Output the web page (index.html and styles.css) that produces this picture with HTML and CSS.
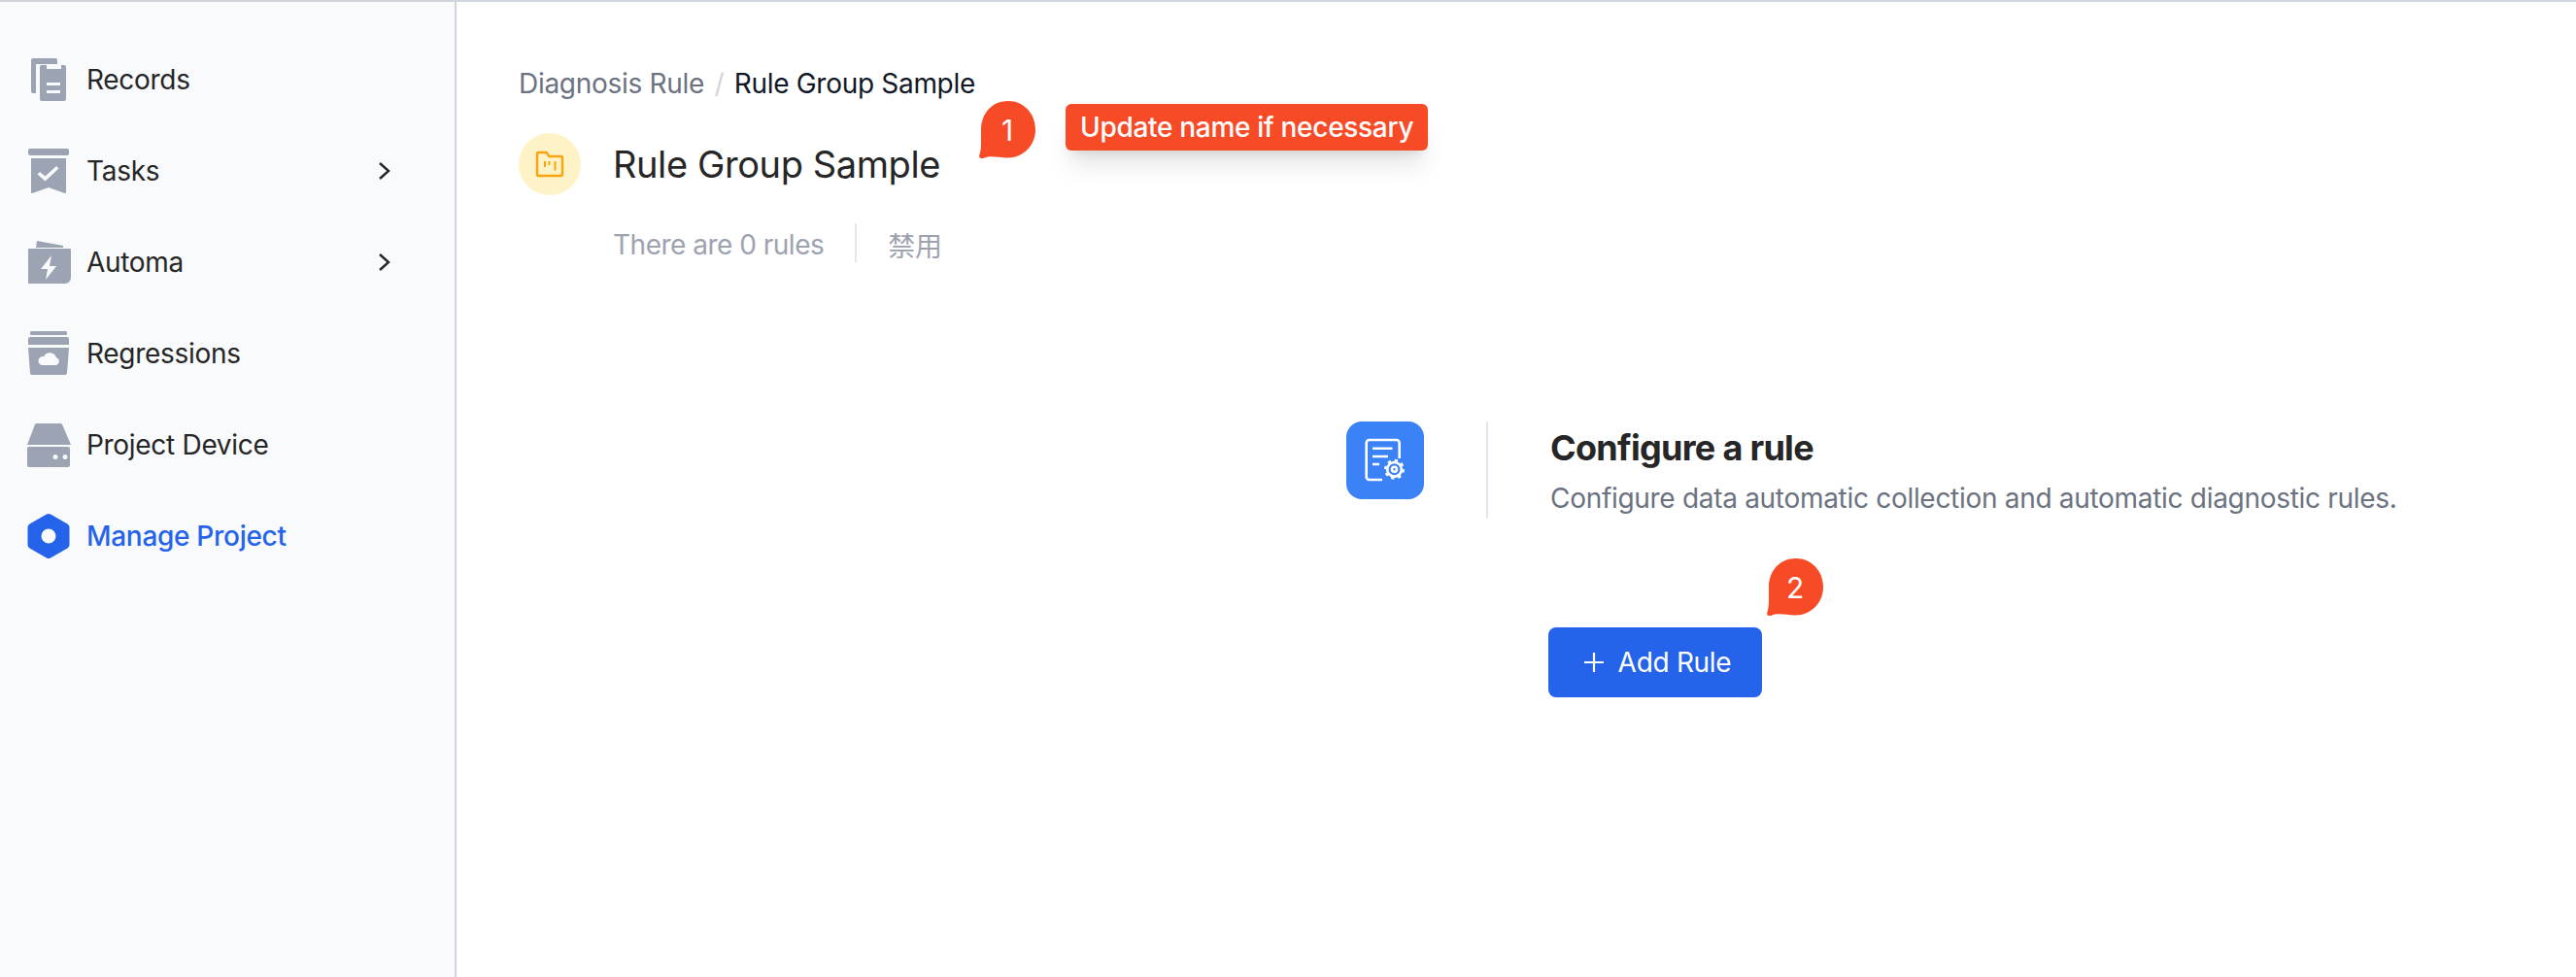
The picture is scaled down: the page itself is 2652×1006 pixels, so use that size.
FILE: index.html
```html
<!DOCTYPE html>
<html lang="en">
<head>
    <meta charset="UTF-8">
    <title>Rule Group Sample</title>
    <link rel="stylesheet" href="styles.css">
</head>
<body>
    <aside class="sidebar">
        <a class="nav-item">
            <svg class="nav-icon" viewBox="0 0 48 48"><path d="M8 2h23a2 2 0 0 1 2 2v4H11v30H8a2 2 0 0 1-2-2V4a2 2 0 0 1 2-2z"/><path fill-rule="evenodd" d="M15 11a2 2 0 0 1 2-2h5v4h15V9h3a2 2 0 0 1 2 2v33a2 2 0 0 1-2 2H17a2 2 0 0 1-2-2zM22 27v3h14v-3zM22 35v3h14v-3z"/></svg>
            <span>Records</span>
        </a>
        <a class="nav-item">
            <svg class="nav-icon" viewBox="0 0 48 48"><rect x="3" y="1" width="42" height="7" rx="2"/><path fill-rule="evenodd" d="M6 11h36v35a1 1 0 0 1-1.300.9L24 41l-16.700 5.900A1 1 0 0 1 6 46zM15 25l-2.500 2.500 8 7 14-13-2.500-2.500-11.500 10.500z"/></svg>
            <span>Tasks</span>
            <svg class="chevron" viewBox="0 0 14 20"><path d="M2 2l9 8-9 8"/></svg>
        </a>
        <a class="nav-item">
            <svg class="nav-icon" viewBox="0 0 48 48"><path d="M12 2l27 5v2H11z"/><path fill-rule="evenodd" d="M3 11a1 1 0 0 1 1-1h42a1 1 0 0 1 1 1v29a6 6 0 0 1-6 6H4a1 1 0 0 1-1-1zM27 17l-11 14h7l-2 11 11-14h-7z"/></svg>
            <span>Automa</span>
            <svg class="chevron" viewBox="0 0 14 20"><path d="M2 2l9 8-9 8"/></svg>
        </a>
        <a class="nav-item">
            <svg class="nav-icon" viewBox="0 0 48 48"><rect x="5" y="1" width="38" height="4" rx="1.500"/><path d="M5 7h38a2 2 0 0 1 2 2v5.500a.5.5 0 0 1-.5.5H3.500a.5.5 0 0 1-.5-.5V9a2 2 0 0 1 2-2z"/><path fill-rule="evenodd" d="M3 18h42l-2 26a2 2 0 0 1-2 2H7a2 2 0 0 1-2-2zM17 36h14a4 4 0 0 0 1-7.800 7 7 0 0 0-13-1A4.500 4.500 0 0 0 17 36z"/></svg>
            <span>Regressions</span>
        </a>
        <a class="nav-item">
            <svg class="nav-icon" viewBox="0 0 48 48"><path d="M10 3a2 2 0 0 1 2-1h24a2 2 0 0 1 2 1l9 21H2z"/><path fill-rule="evenodd" d="M2 28a2 2 0 0 1 2-2h40a2 2 0 0 1 2 2v17a2 2 0 0 1-2 2H4a2 2 0 0 1-2-2zM31 39a2.500 2.500 0 1 0 0-5 2.500 2.500 0 0 0 0 5zM41 39a2.500 2.500 0 1 0 0-5 2.500 2.500 0 0 0 0 5z"/></svg>
            <span>Project Device</span>
        </a>
        <a class="nav-item active">
            <svg class="nav-icon" viewBox="0 0 48 48"><path fill-rule="evenodd" d="M22 1.600a4 4 0 0 1 4 0l17.500 10a4 4 0 0 1 2 3.400v18a4 4 0 0 1-2 3.400l-17.500 10a4 4 0 0 1-4 0l-17.500-10a4 4 0 0 1-2-3.400V15a4 4 0 0 1 2-3.400zM24 31.500a7.500 7.500 0 1 0 0-15 7.500 7.500 0 0 0 0 15z"/></svg>
            <span>Manage Project</span>
        </a>
    </aside>

    <main class="content">
        <div class="breadcrumb">
            <span class="crumb-parent">Diagnosis Rule</span>
            <span class="crumb-sep">/</span>
            <span class="crumb-current">Rule Group Sample</span>
        </div>

        <div class="group-head">
            <div class="group-icon">
                <svg viewBox="0 0 30 28"><path class="folder" d="M2 3.500a1.500 1.500 0 0 1 1.500-1.500h8l3 4h12a1.500 1.500 0 0 1 1.500 1.500v17a1.500 1.500 0 0 1-1.500 1.500h-23A1.500 1.500 0 0 1 2 24.500z"/><path d="M10 11v6M14.500 11v4M20.500 11v9.500"/></svg>
            </div>
            <div class="group-title">
                <h1>Rule Group Sample</h1>
                <div class="bubble bubble-one">
                    <svg viewBox="0 0 60 60"><path d="M59 29.500C59 46 46 59 29.500 58.500 22 58.300 12 56 6.500 58.500 3 60 0 58.500 1.500 55 3.500 50 3 40 3 29.500 3 13 14 0 31 0 47 0 59 13 59 29.500z"/></svg>
                    <span>1</span>
                </div>
                <div class="hint">Update name if necessary</div>
            </div>
        </div>

        <div class="group-meta">
            <span class="meta-count">There are 0 rules</span>
            <div class="meta-rule"></div>
            <span class="meta-status">禁用</span>
        </div>

        <section class="config">
            <div class="config-head">
                <div class="config-icon">
                    <svg viewBox="0 0 48 48"><path d="M21 44H7.700a3 3 0 0 1-3-3V6a3 3 0 0 1 3-3h28a3 3 0 0 1 3 3v16"/><path d="M11 11.700h20.500M11 20h16M11 28h7"/><circle cx="33.500" cy="33.300" r="7.300"/><circle class="cog-teeth" cx="33.500" cy="33.300" r="9.300"/><circle cx="33.500" cy="33.300" r="2.500"/></svg>
                </div>
                <div class="config-rule"></div>
                <div class="config-text">
                    <h2>Configure a rule</h2>
                    <p>Configure data automatic collection and automatic diagnostic rules.</p>
                </div>
            </div>
            <div class="config-action">
                <button class="add-btn" type="button">
                    <svg viewBox="0 0 22 22"><path d="M11 1v20M1 11h20"/></svg>
                    Add Rule
                </button>
                <div class="bubble bubble-two">
                    <svg viewBox="0 0 60 60"><path d="M59 29.500C59 46 46 59 29.500 58.500 22 58.300 12 56 6.500 58.500 3 60 0 58.500 1.500 55 3.500 50 3 40 3 29.500 3 13 14 0 31 0 47 0 59 13 59 29.500z"/></svg>
                    <span>2</span>
                </div>
            </div>
        </section>
    </main>
</body>
</html>
```

FILE: styles.css
```css
* {
    box-sizing: border-box;
}

html, body {
    height: 100%;
}

body {
    display: flex;
    margin: 0;
    border-top: 2px solid #d1d5de;
    background-color: white;
    font-family: Inter, "Noto Sans CJK SC", sans-serif;
    letter-spacing: -0.3px;
    overflow: hidden;
}

/* Sidebar */
.sidebar {
    width: 470px;
    flex-shrink: 0;
    padding-top: 33px;
    background-color: #f9fafc;
    border-right: 2px solid #d1d5de;
}

.nav-item {
    display: flex;
    align-items: center;
    height: 94px;
    padding: 0 65px 0 26px;
    font-size: 28px;
    color: #262626;
}

.nav-icon {
    width: 48px;
    height: 48px;
    margin-right: 15px;
    flex-shrink: 0;
    fill: #9ca3b2;
}

.nav-item.active {
    color: #2563eb;
    font-weight: 500;
}

.nav-item.active .nav-icon {
    fill: #2563eb;
}

.chevron {
    width: 14px;
    height: 20px;
    margin-left: auto;
    fill: none;
    stroke: #262626;
    stroke-width: 2.4;
}

/* Main area */
.content {
    flex: 1;
    padding: 66px 0 0 64px;
}

.breadcrumb {
    display: flex;
    align-items: center;
    gap: 10.500px;
    height: 36px;
    font-size: 28px;
}

.crumb-parent {
    color: #6b7280;
}

.crumb-sep {
    color: #d1d5db;
}

.crumb-current {
    color: #111827;
}

.group-head {
    display: flex;
    align-items: center;
    gap: 33px;
    margin-top: 33px;
}

.group-icon {
    display: flex;
    align-items: center;
    justify-content: center;
    width: 64px;
    height: 64px;
    border-radius: 50%;
    background-color: #fef3c7;
}

.group-icon svg {
    width: 30px;
    height: 28px;
    fill: none;
    stroke: #f9a30f;
    stroke-width: 2;
}

.group-icon .folder {
    stroke-width: 2.400;
}

.group-title {
    position: relative;
}

.group-title h1 {
    margin: 0;
    font-size: 38px;
    font-weight: 400;
    letter-spacing: -0.4px;
    color: #262626;
}

.bubble {
    position: absolute;
    display: flex;
    align-items: center;
    justify-content: center;
    width: 60px;
    height: 60px;
    font-size: 30px;
    color: white;
}

.bubble svg {
    position: absolute;
    top: 0;
    left: 0;
    width: 60px;
    height: 60px;
    fill: #f74a26;
}

.bubble span {
    position: relative;
}

.bubble-one {
    top: -42px;
    left: 376px;
}

.bubble-two {
    top: -71px;
    left: 224px;
}

.hint {
    position: absolute;
    top: -39px;
    left: 466px;
    height: 48px;
    padding: 0 15px;
    border-radius: 6px;
    background-color: #f74a26;
    box-shadow: 0 20px 25px -5px rgba(0, 0, 0, 0.1), 0 8px 10px -6px rgba(0, 0, 0, 0.1);
    color: white;
    font-size: 28px;
    font-weight: 500;
    line-height: 48px;
    white-space: nowrap;
}

.group-meta {
    display: flex;
    align-items: center;
    height: 40px;
    margin: 29px 0 0 97px;
    font-size: 28px;
    color: #9ca3af;
}

.meta-count,
.meta-status {
    padding-top: 3px;
}

.meta-count {
    letter-spacing: -0.5px;
}

.meta-rule {
    width: 2px;
    height: 40px;
    margin: 0 32px;
    background-color: #e5e7eb;
}

/* Configure block */
.config {
    margin: 164px 0 0 852px;
}

.config-head {
    display: flex;
    align-items: flex-start;
}

.config-icon {
    display: flex;
    align-items: center;
    justify-content: center;
    width: 80px;
    height: 80px;
    border-radius: 16px;
    background-color: #3b82f6;
}

.config-icon svg {
    width: 48px;
    height: 48px;
    fill: none;
    stroke: white;
    stroke-width: 2.600;
}

.config-icon .cog-teeth {
    stroke-width: 2.400;
    stroke-dasharray: 3.300 4;
}

.config-rule {
    width: 2px;
    height: 100px;
    margin: 0 64px;
    background-color: #e2e5f0;
}

.config-text h2 {
    margin: 6px 0 0;
    font-size: 36px;
    font-weight: 700;
    letter-spacing: -0.7px;
    line-height: 42px;
    color: #262626;
}

.config-text p {
    margin: 14px 0 0;
    font-size: 28px;
    line-height: 34px;
    color: #6b7280;
}

.config-action {
    position: relative;
    width: 220px;
    margin: 112px 0 0 208px;
}

.add-btn {
    display: flex;
    align-items: center;
    justify-content: center;
    gap: 14px;
    width: 220px;
    height: 72px;
    padding-left: 10px;
    border: none;
    border-radius: 8px;
    background-color: #2563eb;
    color: white;
    font-family: inherit;
    font-size: 28px;
    letter-spacing: -0.3px;
}

.add-btn svg {
    width: 22px;
    height: 22px;
    fill: none;
    stroke: white;
    stroke-width: 2.200;
}
```
